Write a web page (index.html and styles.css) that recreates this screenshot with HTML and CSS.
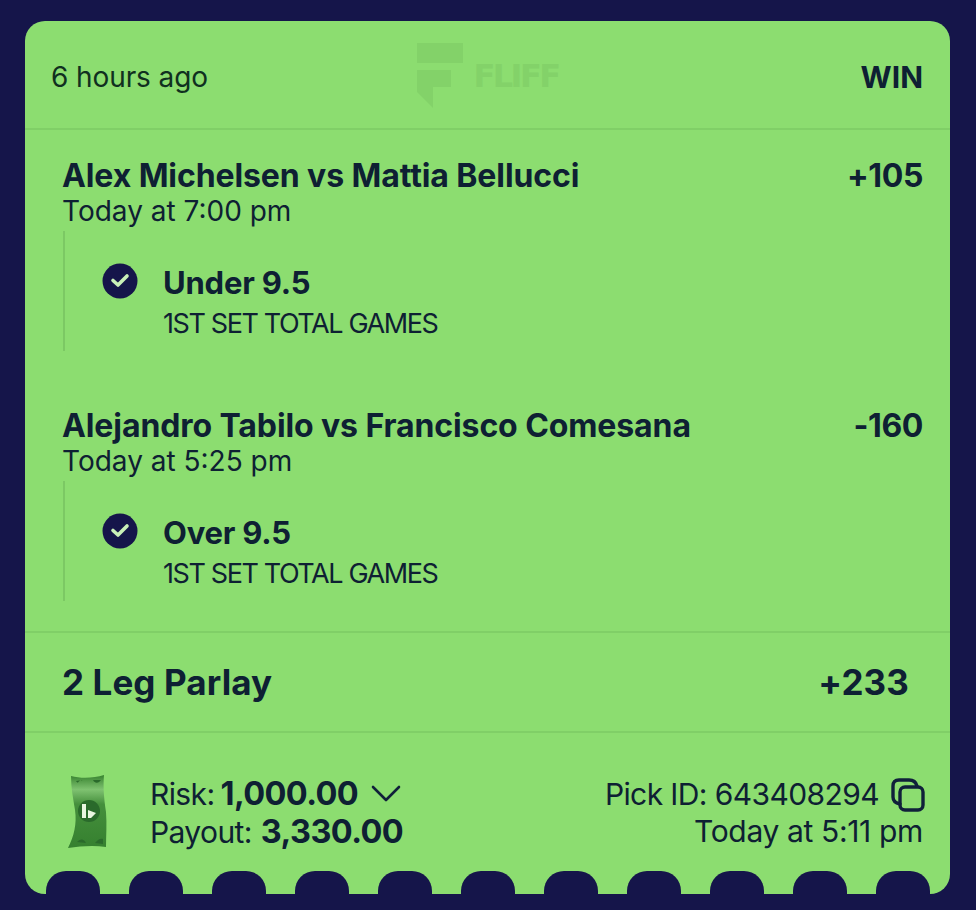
FILE: index.html
```html
<!DOCTYPE html>
<html lang="en">
<head>
    <meta charset="UTF-8">
    <title>Pick</title>
    <link rel="stylesheet" href="styles.css">
</head>
<body>
<div class="ticket">
    <div class="head">
        <span class="ago">6 hours ago</span>
        <div class="brand">
            <svg class="brand-mark" width="48" height="66" viewBox="0 0 48 66">
                <path d="M1 0H47V20H1Z" fill="#83d269"/>
                <path d="M1 27H35V44H17V65L1 49Z" fill="#83d269"/>
            </svg>
            <span class="brand-name">FLIFF</span>
        </div>
        <span class="result">WIN</span>
    </div>

    <div class="legs">
        <div class="leg">
            <div class="leg-top">
                <span class="match">Alex Michelsen vs Mattia Bellucci</span>
                <span class="odds">+105</span>
            </div>
            <div class="when">Today at 7:00 pm</div>
            <div class="pick">
                <svg class="check" width="36" height="36" viewBox="0 0 36 36">
                    <circle cx="18" cy="18" r="17.5" fill="#15154a"/>
                    <path d="M11 17.5L16 22L25 13" fill="none" stroke="#c9efb8" stroke-width="3.6" stroke-linecap="round" stroke-linejoin="round"/>
                </svg>
                <div>
                    <div class="pick-name">Under 9.5</div>
                    <div class="pick-type">1ST SET TOTAL GAMES</div>
                </div>
            </div>
        </div>
        <div class="leg">
            <div class="leg-top">
                <span class="match">Alejandro Tabilo vs Francisco Comesana</span>
                <span class="odds">-160</span>
            </div>
            <div class="when">Today at 5:25 pm</div>
            <div class="pick">
                <svg class="check" width="36" height="36" viewBox="0 0 36 36">
                    <circle cx="18" cy="18" r="17.5" fill="#15154a"/>
                    <path d="M11 17.5L16 22L25 13" fill="none" stroke="#c9efb8" stroke-width="3.6" stroke-linecap="round" stroke-linejoin="round"/>
                </svg>
                <div>
                    <div class="pick-name">Over 9.5</div>
                    <div class="pick-type">1ST SET TOTAL GAMES</div>
                </div>
            </div>
        </div>
    </div>

    <div class="parlay">
        <span>2 Leg Parlay</span>
        <span>+233</span>
    </div>

    <div class="foot">
        <div class="money">
            <svg class="bill" width="40" height="76" viewBox="0 0 40 76">
                <defs>
                    <linearGradient id="billFill" x1="0" y1="0" x2="0" y2="1">
                        <stop offset="0" stop-color="#37822f"/>
                        <stop offset="0.2" stop-color="#7fc271"/>
                        <stop offset="0.4" stop-color="#458f3c"/>
                        <stop offset="1" stop-color="#35802f"/>
                    </linearGradient>
                </defs>
                <path d="M3 2C14 5 26 4 36 1C35 14 36 24 38 38C39 50 38 62 38 73C26 71 13 72 0 74C6 62 9 50 7 36C5 24 3 14 3 2Z" fill="url(#billFill)"/>
                <circle cx="21" cy="37" r="11" fill="#2a6a2b"/>
                <path d="M14 30H18V44H14ZM20 36L28 39L23 44H20Z" fill="#e8f5e0"/>
                <path d="M8 7C11 11 9 6 15 6ZM25 6C27 10 31 9 33 6ZM9 68C13 64 16 65 18 69ZM27 69C30 65 33 64 35 65V70Z" fill="#2a6a2b"/>
            </svg>
            <div class="amounts">
                <div class="amount-row">Risk: <b>1,000.00</b>
                    <svg class="chev" width="30" height="18" viewBox="0 0 30 18">
                        <path d="M2 2L15 15L28 2" fill="none" stroke="#10203a" stroke-width="2.6" stroke-linecap="round" stroke-linejoin="round"/>
                    </svg>
                </div>
                <div class="amount-row payout">Payout: <b>3,330.00</b></div>
            </div>
        </div>
        <div class="pick-info">
            <div class="id-row">Pick ID: 643408294
                <svg class="copy" width="34" height="34" viewBox="0 0 34 34">
                    <rect x="9" y="9" width="23" height="23" rx="5" fill="none" stroke="#10203a" stroke-width="3.4"/>
                    <path d="M9 26C4 25 2 23 2 19V8C2 4 4 2 8 2H18C22 2 25 4 26 8" fill="none" stroke="#10203a" stroke-width="3.4" stroke-linecap="round"/>
                </svg>
            </div>
            <div class="pick-time">Today at 5:11 pm</div>
        </div>
    </div>

    <div class="teeth">
        <i></i><i></i><i></i><i></i><i></i><i></i><i></i><i></i><i></i><i></i><i></i>
    </div>
</div>
</body>
</html>
```

FILE: styles.css
```css
*{
    margin: 0;
    padding: 0;
    box-sizing: border-box;
}
body{
    background: #15154a;
    padding: 21px 26px 16px 25px;
    font-family: "Inter", "Liberation Sans", sans-serif;
    color: #0e2033;
}
.ticket{
    position: relative;
    height: 873px;
    background: #8cdd70;
    border-radius: 20px;
    overflow: hidden;
    display: flex;
    flex-direction: column;
}
.head{
    height: 109px;
    display: grid;
    grid-template-columns: 1fr auto 1fr;
    align-items: center;
    padding: 4px 27px 0 26px;
    border-bottom: 2px solid #80cf67;
}
.ago{
    font-size: 28px;
    letter-spacing: -0.1px;
    color: #10301f;
}
.result{
    text-align: right;
    font-size: 30px;
    font-weight: 700;
}
.brand{
    display: flex;
    align-items: center;
    gap: 10px;
    margin-top: -1px;
}
.brand-name{
    font-family: "DejaVu Sans", sans-serif;
    font-size: 32px;
    font-weight: 700;
    color: #83d269;
    letter-spacing: -2.6px;
}
.legs{
    height: 503px;
    padding: 26px 27px 0 37px;
    display: flex;
    flex-direction: column;
    gap: 40px;
    border-bottom: 2px solid #80cf67;
}
.leg{
    height: 210px;
}
.leg-top{
    display: flex;
    justify-content: space-between;
    align-items: center;
    height: 38px;
}
.match{
    font-size: 32px;
    font-weight: 700;
    letter-spacing: -0.1px;
}
.odds{
    font-size: 32px;
    font-weight: 700;
    letter-spacing: -0.4px;
}
.when{
    margin-top: 1px;
    font-size: 28px;
    line-height: 32px;
}
.pick{
    margin: 4px 0 0 1px;
    height: 120px;
    border-left: 2px solid #7cc864;
    display: flex;
    align-items: flex-start;
    gap: 25px;
    padding: 32px 0 0 37px;
}
.pick-name{
    font-size: 31px;
    font-weight: 700;
    line-height: 40px;
    letter-spacing: -0.2px;
}
.pick-type{
    font-size: 27px;
    line-height: 41px;
    letter-spacing: -1.4px;
}
.parlay{
    height: 100px;
    display: flex;
    justify-content: space-between;
    align-items: center;
    padding: 0 41px 0 37px;
    border-bottom: 2px solid #80cf67;
    font-size: 35px;
    font-weight: 700;
    letter-spacing: 0.1px;
}
.foot{
    display: flex;
    justify-content: space-between;
    align-items: flex-start;
    padding: 42px 25px 0 43px;
    font-size: 30px;
    letter-spacing: -0.6px;
}
.money{
    display: flex;
    gap: 42px;
}
.bill{
    margin-top: -1px;
}
.amount-row{
    display: flex;
    align-items: center;
    gap: 6px;
    height: 38px;
    line-height: 38px;
}
.payout{
    gap: 9px;
}
.amount-row b{
    font-size: 32.5px;
}
.chev{
    margin-left: 7px;
}
.pick-info{
    margin-top: 1px;
    text-align: right;
    line-height: 37px;
}
.id-row{
    display: flex;
    align-items: center;
    gap: 12px;
}
.copy{
    margin-top: 1px;
}
.pick-time{
    padding-right: 2px;
    letter-spacing: -0.35px;
}
.teeth{
    position: absolute;
    left: 21px;
    right: 20px;
    bottom: 0;
    display: flex;
    justify-content: space-between;
}
.teeth i{
    display: block;
    width: 54px;
    height: 23px;
    background: #15154a;
    border-radius: 20px 20px 0 0;
}
```
